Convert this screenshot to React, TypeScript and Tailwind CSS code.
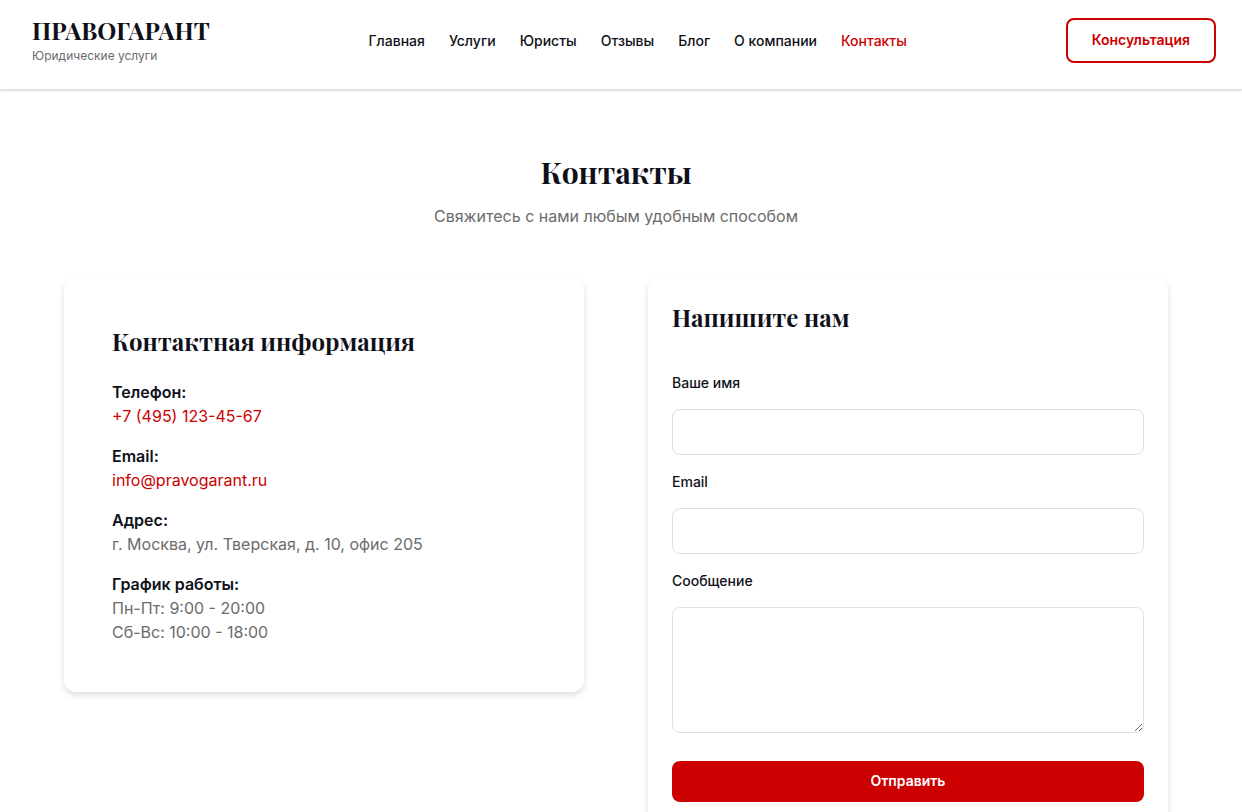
import React, { useState } from "react";

const navItems = [
  { label: "Главная", href: "#home" },
  { label: "Услуги", href: "#services" },
  { label: "Юристы", href: "#lawyers" },
  { label: "Отзывы", href: "#reviews" },
  { label: "Блог", href: "#blog" },
  { label: "О компании", href: "#about" },
  { label: "Контакты", href: "#contacts" },
];

const serif = "font-['Playfair_Display','Liberation_Serif',serif] font-bold";

const Header: React.FC = () => {
  return (
    <header className="border-b border-[#e0e0e0] bg-white shadow-[0_1px_2px_rgba(0,0,0,0.15)]">
      <div className="mr-2.5 flex items-start justify-between pt-[18px] pr-4 pb-[23px] pl-8">
        <a href="#home" className="block">
          <span className={`block text-2xl leading-6 ${serif}`}>ПРАВОГАРАНТ</span>
          <span className="mt-1 block text-xs leading-5 text-[#6b6b6b]">Юридические услуги</span>
        </a>
        <nav className="flex h-[45px] items-center gap-6 text-sm font-medium">
          {navItems.map((item) => (
            <a
              key={item.href}
              href={item.href}
              className={item.href === "#contacts" ? "text-[#cc0000]" : "hover:text-[#cc0000]"}
            >
              {item.label}
            </a>
          ))}
        </nav>
        <button
          type="button"
          className="h-[45px] cursor-pointer rounded-lg border-2 border-[#cc0000] px-6 pb-0.5 text-sm font-semibold text-[#cc0000]"
        >
          Консультация
        </button>
      </div>
    </header>
  );
};

const ContactInfo: React.FC = () => {
  return (
    <section className="rounded-xl bg-white p-12 shadow-[0_3px_6px_rgba(0,0,0,0.14)]">
      <h2 className={`mb-6 text-2xl leading-[30px] ${serif}`}>Контактная информация</h2>
      <dl className="flex flex-col gap-4 text-base text-[#6b6b6b]">
        <div>
          <dt className="font-semibold text-[#0f111a]">Телефон:</dt>
          <dd>
            <a href="tel:+74951234567" className="text-[#cc0000]">+7 (495) 123-45-67</a>
          </dd>
        </div>
        <div>
          <dt className="font-semibold text-[#0f111a]">Email:</dt>
          <dd>
            <a href="mailto:info@pravogarant.ru" className="text-[#cc0000]">info@pravogarant.ru</a>
          </dd>
        </div>
        <div>
          <dt className="font-semibold text-[#0f111a]">Адрес:</dt>
          <dd>г. Москва, ул. Тверская, д. 10, офис 205</dd>
        </div>
        <div>
          <dt className="font-semibold text-[#0f111a]">График работы:</dt>
          <dd>Пн-Пт: 9:00 - 20:00</dd>
          <dd>Сб-Вс: 10:00 - 18:00</dd>
        </div>
      </dl>
    </section>
  );
};

const ContactForm: React.FC = () => {
  const [form, setForm] = useState({ name: "", email: "", message: "" });

  const handleChange = (e: React.ChangeEvent<HTMLInputElement | HTMLTextAreaElement>) => {
    setForm({ ...form, [e.target.name]: e.target.value });
  };

  const handleSubmit = (e: React.FormEvent) => {
    e.preventDefault();
    setForm({ name: "", email: "", message: "" });
  };

  const field = "block w-full rounded-lg border border-[#e0e0e0] bg-white px-4 outline-none focus:border-[#cc0000]";

  return (
    <section className="rounded-xl bg-white p-6 shadow-[0_3px_6px_rgba(0,0,0,0.14)]">
      <h2 className={`mb-10 text-2xl leading-[30px] ${serif}`}>Напишите нам</h2>
      <form onSubmit={handleSubmit}>
        <label htmlFor="name" className="mb-4 block text-sm leading-[21px] font-medium">Ваше имя</label>
        <input id="name" name="name" type="text" value={form.name} onChange={handleChange} className={`mb-4 h-[46px] ${field}`} />
        <label htmlFor="email" className="mb-4 block text-sm leading-[21px] font-medium">Email</label>
        <input id="email" name="email" type="email" value={form.email} onChange={handleChange} className={`mb-4 h-[46px] ${field}`} />
        <label htmlFor="message" className="mb-4 block text-sm leading-[21px] font-medium">Сообщение</label>
        <textarea id="message" name="message" value={form.message} onChange={handleChange} className={`mb-7 h-[126px] resize-y py-3 ${field}`} />
        <button type="submit" className="h-[41px] w-full cursor-pointer rounded-lg bg-[#cc0000] pb-0.5 text-sm font-semibold text-white">
          Отправить
        </button>
      </form>
    </section>
  );
};

const App: React.FC = () => {
  return (
    <div className="min-h-screen bg-white font-['Inter',sans-serif] text-[#0f111a]">
      <Header />
      <main className="mr-2.5 px-16 py-16">
        <div className="mb-[50px] text-center">
          <h1 className={`mb-3.5 text-3xl leading-9 ${serif}`}>Контакты</h1>
          <p className="text-base text-[#6b6b6b]">Свяжитесь с нами любым удобным способом</p>
        </div>
        <div className="grid grid-cols-2 items-start gap-16">
          <ContactInfo />
          <ContactForm />
        </div>
      </main>
    </div>
  );
};

export default App;
